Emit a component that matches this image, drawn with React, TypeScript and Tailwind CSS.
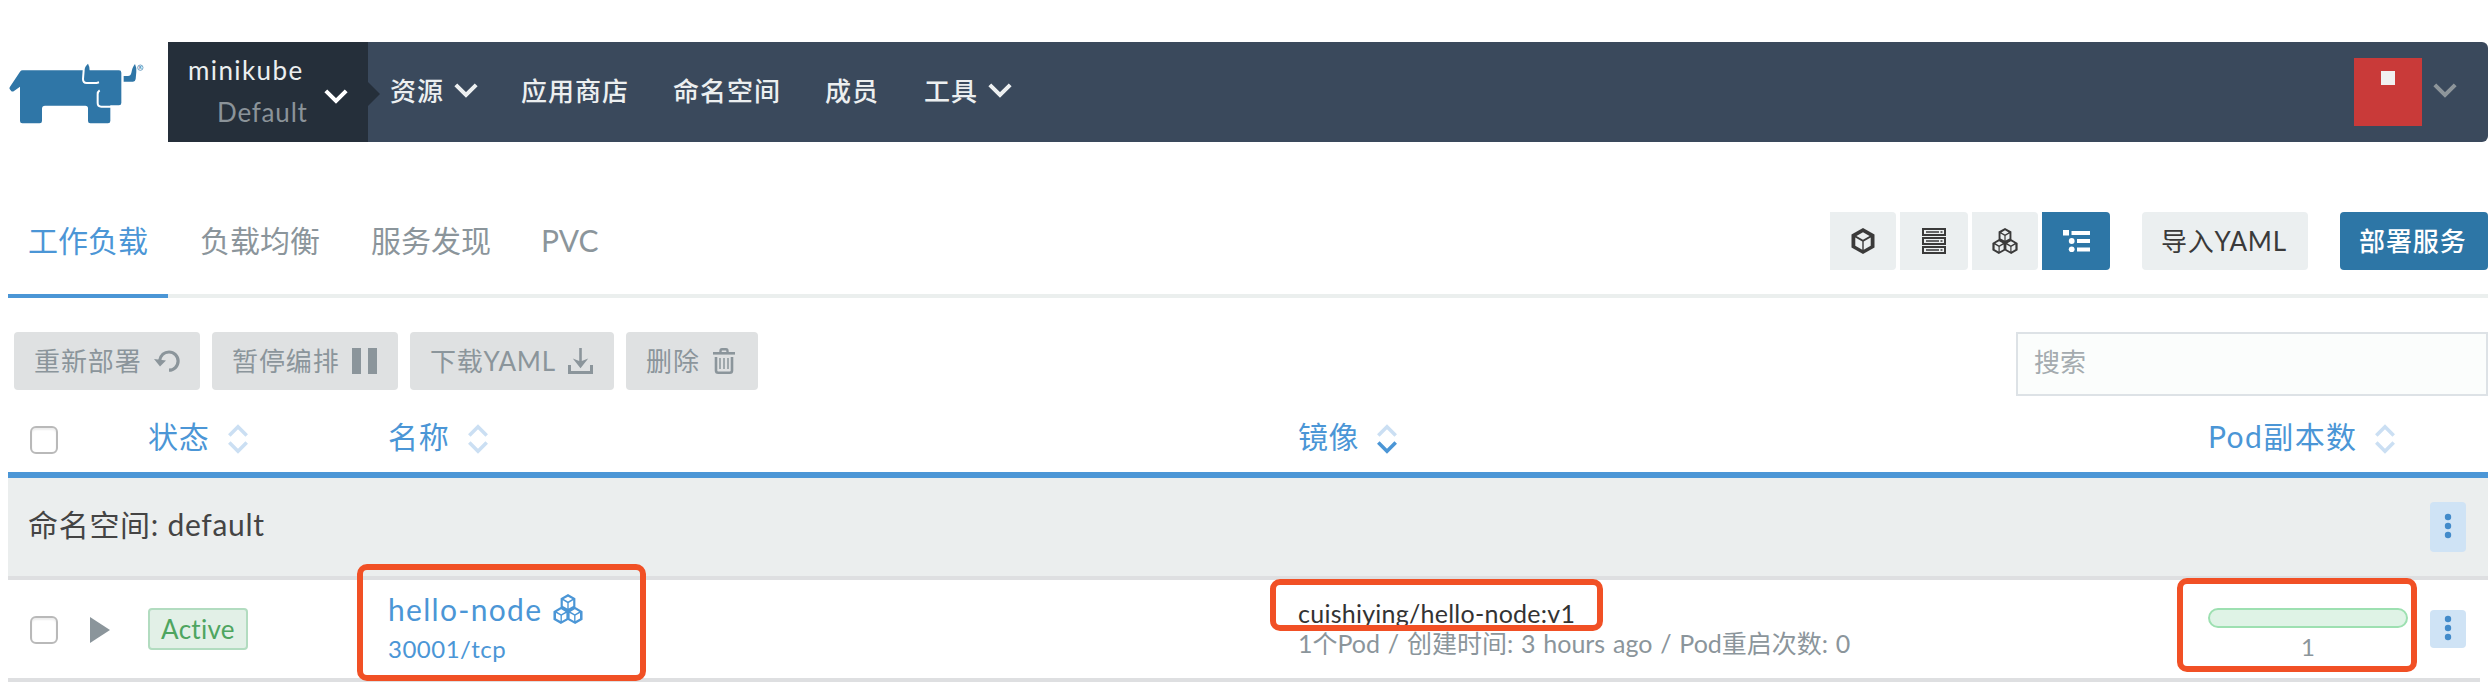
import React from 'react';

function Chevron({ className }: { className?: string }) {
  return (
    <svg viewBox="0 0 24 15" width="24" height="15" fill="none" stroke="currentColor" strokeWidth="4" className={className}>
      <path d="M1.8 1.8 12 12 22.2 1.8" />
    </svg>
  );
}

function Logo() {
  return (
    <svg viewBox="0 0 450 240" width="150" height="80" fill="#2f76a7">
      <path d="M68 46H357Q364 46 364 53V144Q364 151 357 151H331V198Q331 205 324 205H271Q264 205 264 198V160Q264 152 256 152H135Q126 152 126 161V198Q126 205 119 205H67Q60 205 60 198V95L42 108Q37 112 33 107L29 102Q27 99 30 95L60 50Q63 46 68 46Z" />
      <path d="M251 46Q256 32 264 26Q270 36 269 48L268 60H251Z" />
      <path d="M251 36V46L249 72Q249 84 260 84H290L297 82" fill="none" stroke="#fff" strokeWidth="6" />
      <path d="M299 106Q293 110 293 118V144Q293 155 304 155H334" fill="none" stroke="#fff" strokeWidth="6" />
      <path d="M371 63H384Q392 63 394 54Q397 36 405 27Q410 38 409 50L407 72Q406 80 399 80H371Z" />
      <circle cx="421" cy="38" r="8" fill="none" stroke="#2f76a7" strokeWidth="2" />
      <text x="417" y="42.500" fontSize="12" fontWeight="700" fontFamily="Lato, sans-serif">R</text>
    </svg>
  );
}

function CubeIcon() {
  return (
    <svg viewBox="0 0 24 26" width="24" height="26">
      <path d="M12 0 23.500 6.500V19.500L12 26 .5 19.500V6.500Z" fill="currentColor" />
      <path d="M12 4.300 18.600 8 12 11.800 5.400 8ZM4.300 9.600 11.300 13.600V21.800L4.300 17.800ZM19.700 9.600 12.700 13.600V21.800L19.700 17.800Z" fill="#ebeff0" />
    </svg>
  );
}

function ServerIcon() {
  return (
    <svg viewBox="0 0 24 26" width="24" height="26" fill="none" stroke="currentColor">
      {[0, 9, 18].map((y) => (
        <g key={y}>
          <rect x="1" y={y + 1} width="22" height="6" strokeWidth="2" />
          <path d={`M4 ${y + 4}H17M18.500 ${y + 4}H20.500`} strokeWidth="1.400" />
        </g>
      ))}
    </svg>
  );
}

function CubesIcon({ size, fill }: { size: number; fill: string }) {
  return (
    <svg viewBox="0 0 26 26" width={size} height={size}>
      <path d="M13 0 19.400 3.600V11.300L25.600 15V22.300L19.200 26 13 22.600 6.800 26 .4 22.300V15L6.600 11.300V3.600Z" fill="currentColor" />
      {[[13, 2.3], [7.1, 13.2], [18.9, 13.2]].map(([x, y]) => (
        <g key={x} transform={`translate(${x} ${y})`} fill={fill}>
          <path d="M0 0 3.700 2.100 0 4.300-3.700 2.100ZM-4.500 3.200-.6 5.500V10.300L-4.500 8.100ZM4.500 3.200.6 5.500V10.300L4.500 8.100Z" />
        </g>
      ))}
    </svg>
  );
}

function TreeIcon() {
  return (
    <svg viewBox="0 0 27 22" width="27" height="22" fill="#fff">
      <path d="M0 0H6V5.500H0ZM8.500 1H27V5H8.500ZM14 9H27V13H14ZM14 17.500H27V21.500H14Z" />
      <circle cx="8.700" cy="11" r="2.900" />
      <circle cx="8.700" cy="19.300" r="2.900" />
    </svg>
  );
}

function UndoIcon() {
  return (
    <svg viewBox="0 0 26 22" width="26" height="22">
      <path d="M5.500 11C6.500 5 10.500 2 15 2A9 9 0 0 1 15 20.200" fill="none" stroke="currentColor" strokeWidth="3.200" />
      <path d="M0 9 12 10.500 6 16.500Z" fill="currentColor" />
    </svg>
  );
}

function PauseIcon() {
  return (
    <svg viewBox="0 0 25 26" width="25" height="26" fill="currentColor">
      <path d="M0 0H9V26H0ZM16 0H25V26H16Z" />
    </svg>
  );
}

function DownloadIcon() {
  return (
    <svg viewBox="0 0 25 26" width="25" height="26" fill="none" stroke="currentColor">
      <path d="M1.500 17V24.500H23.500V17" strokeWidth="3" />
      <path d="M12.500 0V17" strokeWidth="2.600" />
      <path d="M4.800 10.500 12.500 13.500 20.200 10.500 12.500 20.200Z" fill="currentColor" stroke="none" />
    </svg>
  );
}

function TrashIcon() {
  return (
    <svg viewBox="0 0 22 26" width="22" height="26" fill="none" stroke="currentColor">
      <path d="M0 5.300H22" strokeWidth="2.600" />
      <path d="M7.500 4.500V3Q7.500 1.300 9 1.300H13Q14.500 1.300 14.500 3V4.500" strokeWidth="2.400" />
      <path d="M3 9V22.500Q3 24.700 5.200 24.700H16.800Q19 24.700 19 22.500V9" strokeWidth="2.600" />
      <path d="M7 10V21M11 10V21M15 10V21" strokeWidth="1.500" />
    </svg>
  );
}

function SortIcon({ active }: { active?: boolean }) {
  return (
    <svg viewBox="0 0 20 30" width="20" height="30" fill="none" strokeWidth="3.600" className="mt-[5px]">
      <path d="M1.300 11.500 10 2.800 18.700 11.500" stroke="#cbdff3" />
      <path d="M1.300 18.500 10 27.200 18.700 18.500" stroke={active ? '#4b96d6' : '#cbdff3'} />
    </svg>
  );
}

function Dots() {
  return (
    <svg viewBox="0 0 8 26" width="8" height="26" fill="#428bca" className="-mt-0.5">
      <circle cx="4" cy="4" r="3.200" />
      <circle cx="4" cy="13" r="3.200" />
      <circle cx="4" cy="22" r="3.200" />
    </svg>
  );
}

function Checkbox() {
  return <div className="h-7 w-7 shrink-0 rounded-[6px] border-2 border-[#b9b9b9] bg-white shadow-[inset_0_2px_2px_#eeeeee]" />;
}

function HeaderCell({ label, active, tracking }: { label: string; active?: boolean; tracking: string }) {
  return (
    <div className="flex items-center gap-[18px]">
      <span className={`text-[30px] leading-9 ${tracking}`}>{label}</span>
      <SortIcon active={active} />
    </div>
  );
}

const tableGrid = 'grid grid-cols-[140px_240px_910px_910px_1fr]';

export default function App() {
  return (
    <div className="relative h-[696px] w-[2490px] overflow-hidden whitespace-nowrap bg-white pt-[42px] font-['Lato','Noto_Sans_CJK_SC',sans-serif] text-[26px] leading-8 text-[#444]">
      <header className="flex h-[100px] w-[2488px]">
        <div className="w-[168px] shrink-0 pt-[13px]">
          <Logo />
        </div>
        <nav className="flex flex-1 overflow-hidden rounded-r-[6px] bg-[#3a495c] text-[#eceff0]">
          <div className="flex w-[200px] items-center bg-[#252f3a]">
            <div className="ml-5 w-[120px]">
              <div className="-mt-0.5 h-[42px] text-[26px] leading-8 tracking-[1.4px]">minikube</div>
              <div className="ml-[29px] leading-8 tracking-[0.8px] text-[#8b9399]">Default</div>
            </div>
            <Chevron className="ml-4 mt-2 text-white" />
          </div>
          <div className="mt-10 h-6 w-3 bg-[#252f3a] [clip-path:polygon(0_0,100%_50%,0_100%)]" />
          <div className="flex h-[97px] items-center pl-[10px] font-medium tracking-[1px]">
            <span>资源</span>
            <Chevron className="ml-[10px]" />
            <span className="ml-[43px]">应用商店</span>
            <span className="ml-[44px]">命名空间</span>
            <span className="ml-[44px]">成员</span>
            <span className="ml-[45px]">工具</span>
            <Chevron className="ml-[10px]" />
          </div>
          <div className="ml-auto flex items-start pr-[31px] pt-4">
            <div className="flex h-[68px] w-[68px] justify-center bg-[#c93a39] pt-[13px]">
              <div className="h-[14px] w-[14px] bg-[#f0f0f0]" />
            </div>
            <Chevron className="ml-[11px] mt-[25px] text-[#8d959a]" />
          </div>
        </nav>
      </header>

      <div className="ml-2 mt-[50px] flex h-[106px] w-[2480px] border-b-4 border-[#ebefee] text-[30px] text-[#8b959b]">
        <div className="relative h-[106px] w-40 border-b-4 border-[#4b96d6] pl-5 pt-8 text-[#4b96d6]">工作负载</div>
        <div className="ml-8 pt-8">负载均衡</div>
        <div className="ml-[51px] pt-8">服务发现</div>
        <div className="ml-[50px] pt-8">PVC</div>
        <div className="ml-auto flex pt-5 text-[26px] text-[#3a3a3a]">
          <div className="flex h-[58px] w-[66px] items-center justify-center rounded-r-[4px] bg-[#ebeff0]"><CubeIcon /></div>
          <div className="ml-1 flex h-[58px] w-[68px] items-center justify-center rounded-r-[4px] bg-[#ebeff0]"><ServerIcon /></div>
          <div className="ml-1 flex h-[58px] w-[66px] items-center justify-center rounded-r-[4px] bg-[#ebeff0]"><CubesIcon size={26} fill="#ebeff0" /></div>
          <div className="ml-1 flex h-[58px] w-[68px] items-center justify-center rounded-r-[4px] bg-[#2d76a6]"><TreeIcon /></div>
          <div className="ml-8 flex h-[58px] w-[166px] items-center rounded-[4px] bg-[#ebeff0] pl-[19px] tracking-[0.7px]">导入YAML</div>
          <div className="ml-8 flex h-[58px] w-[148px] items-center rounded-[4px] bg-[#2d76a6] pl-[19px] font-medium tracking-[0.9px] text-white">部署服务</div>
        </div>
      </div>

      <div className="ml-[14px] mt-[34px] flex h-16 w-[2474px] gap-3 text-[#8b959b]">
        <div className="flex h-[58px] w-[186px] items-center justify-between rounded-[4px] bg-[#dfe1e2] pl-5 pr-5"><span className="tracking-[0.9px]">重新部署</span><UndoIcon /></div>
        <div className="flex h-[58px] w-[186px] items-center justify-between rounded-[4px] bg-[#dfe1e2] pl-5 pr-[21px]"><span className="tracking-[0.9px]">暂停编排</span><PauseIcon /></div>
        <div className="flex h-[58px] w-[204px] items-center justify-between rounded-[4px] bg-[#dfe1e2] pl-5 pr-[21px]"><span className="tracking-[0.7px]">下载YAML</span><DownloadIcon /></div>
        <div className="flex h-[58px] w-[132px] items-center justify-between rounded-[4px] bg-[#dfe1e2] pl-5 pr-[23px]"><span className="tracking-[0.9px]">删除</span><TrashIcon /></div>
        <div className="ml-auto flex h-16 w-[472px] items-center border-2 border-[#dde2e6] bg-[#fbfdfc] pb-1 pl-4 text-[#a4abaf]">搜索</div>
      </div>

      <div className="ml-2 w-[2480px]">
        <div className={`${tableGrid} h-[82px] border-b-[6px] border-[#4b96d6] pt-1 text-[#4b96d6]`}>
          <div className="flex items-center pl-[22px] pt-2"><Checkbox /></div>
          <HeaderCell label="状态" tracking="tracking-[0.8px]" />
          <HeaderCell label="名称" tracking="tracking-[0.8px]" />
          <HeaderCell label="镜像" active tracking="tracking-[0.6px]" />
          <HeaderCell label="Pod副本数" tracking="tracking-[1.4px]" />
        </div>

        <div className="flex h-[102px] items-center justify-between border-b-4 border-[#dedfe1] bg-[#ebeeee] pl-5 pr-[22px]">
          <span className="-mt-1.5 text-[30px] leading-9 tracking-[0.7px]">命名空间: default</span>
          <div className="flex h-[50px] w-9 items-center justify-center rounded-[4px] bg-[#cfe3f5]"><Dots /></div>
        </div>

        <div className={`${tableGrid} h-[102px] w-[2472px] border-b-4 border-[#dedfe1]`}>
          <div className="flex items-center gap-8 pl-[22px] pt-0.5">
            <Checkbox />
            <div className="h-[26px] w-5 bg-[#8b959b] [clip-path:polygon(0_0,100%_50%,0_100%)]" />
          </div>
          <div className="flex items-center">
            <div className="flex h-[42px] w-[100px] items-center justify-center rounded-[4px] border-2 border-[#b2dcc0] bg-[#e2f0e7] tracking-[0.3px] text-[#4ea560]">Active</div>
          </div>
          <div className="relative pt-[11px] text-[#4b96d6]">
            <div className="flex items-center gap-[11px]">
              <span className="text-[30px] leading-9 tracking-[1.3px]">hello-node</span>
              <CubesIcon size={30} fill="#fff" />
            </div>
            <div className="mt-[6px] text-[24px] tracking-[0.5px]">30001/tcp</div>
            <div className="absolute left-[-31px] top-[-16px] h-[117px] w-[289px] rounded-[10px] border-[6px] border-[#f15025]" />
          </div>
          <div className="relative pt-[17px]">
            <div className="h-[30px] text-[25px] tracking-[0.25px] text-[#333]">cuishiying/hello-node:v1</div>
            <div className="text-[25px] text-[#8b959b] [word-spacing:1.4px]">1个Pod / 创建时间: 3 hours ago / Pod重启次数: 0</div>
            <div className="absolute left-[-28px] top-[-1px] h-[52px] w-[333px] rounded-[10px] border-[6px] border-[#f15025]" />
          </div>
          <div className="relative flex">
            <div className="w-[200px] pt-7 text-center text-[#8b959b]">
              <div className="h-5 rounded-full border-2 border-[#9de0b1] bg-[#dff3e6]" />
              <div className="mt-[3px] text-[24px]">1</div>
            </div>
            <div className="ml-[22px] mt-[30px] flex h-[38px] w-9 items-center justify-center rounded-[4px] bg-[#cfe3f5]"><Dots /></div>
            <div className="absolute left-[-31px] top-[-2px] h-[94px] w-[240px] rounded-[10px] border-[6px] border-[#f15025]" />
          </div>
        </div>
      </div>
    </div>
  );
}
